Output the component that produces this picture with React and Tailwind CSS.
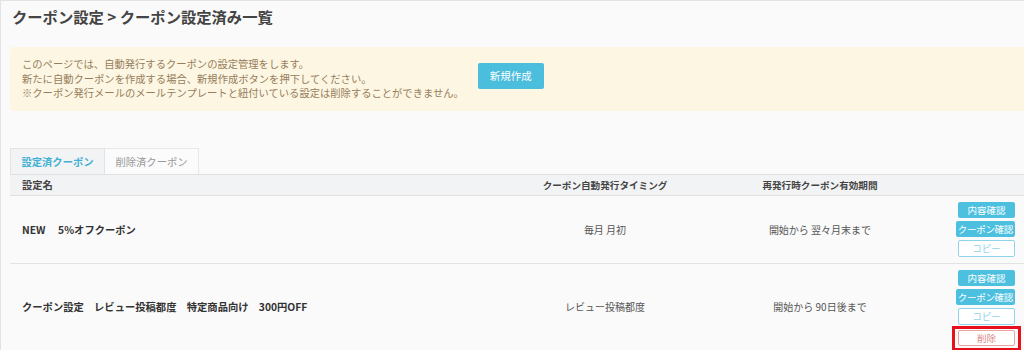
const rows = [
    {
        name: 'NEW\u3000 5%オフクーポン',
        timing: '毎月 月初',
        period: '開始から 翌々月末まで',
        deletable: false,
    },
    {
        name: 'クーポン設定\u3000レビュー投稿都度\u3000特定商品向け\u3000300円OFF',
        timing: 'レビュー投稿都度',
        period: '開始から 90日後まで',
        deletable: true,
    },
];

const RowButtons = ({ deletable }) => (
    <div className="flex flex-col items-end gap-[3px] pr-[9px]">
        <button className="h-[16px] min-w-[57px] px-[4px] bg-[#4dbfdf] rounded-[2px] text-white text-[9.5px] leading-[16px]">
            内容確認
        </button>
        <button className="h-[16px] min-w-[59px] px-[2px] bg-[#4dbfdf] rounded-[2px] text-white text-[9.5px] leading-[16px] tracking-[-0.3px]">
            クーポン確認
        </button>
        <button className="h-[17px] w-[57px] border border-[#8fd4ea] bg-white rounded-[2px] text-[#8fd4ea] text-[9.5px] leading-[15px]">
            コピー
        </button>
        {deletable && (
            <div className="-mt-[2px] -mr-[6px] px-[3px] pt-[1px] pb-[2px] border-[3px] border-[#e8101a]">
                <button className="block h-[16px] w-[57px] border border-[#eaa3a3] bg-white rounded-[2px] text-[#e08a8a] text-[9.5px] leading-[14px]">
                    削除
                </button>
            </div>
        )}
    </div>
);

const App = () => {
    return (
        <div
            className="min-h-[350px] bg-[#fafafa] border-l border-t border-[#e3e3e3] overflow-hidden"
            style={{ fontFamily: '"Noto Sans CJK JP", "Noto Sans", sans-serif' }}
        >
            <h1 className="pl-[11px] pt-[4px] text-[15.3px] leading-[22px] font-bold text-[#444]">
                クーポン設定 &gt; クーポン設定済み一覧
            </h1>

            {/* notice */}
            <div className="ml-[9px] mt-[20px] h-[64px] bg-[#fcf6e2] rounded-l-[3px] flex items-center">
                <div className="pl-[12px] text-[10.3px] leading-[14.5px] text-[#977d5c]">
                    <p>このページでは、自動発行するクーポンの設定管理をします。</p>
                    <p>新たに自動クーポンを作成する場合、新規作成ボタンを押下してください。</p>
                    <p>※クーポン発行メールのメールテンプレートと紐付いている設定は削除することができません。</p>
                </div>
                <button className="ml-[14px] mb-[7px] w-[66px] h-[26px] bg-[#4bbddd] rounded-[2px] text-white text-[10.5px]">
                    新規作成
                </button>
            </div>

            {/* tabs */}
            <div className="ml-[9px] mt-[37px] flex h-[26px]">
                <div className="w-[95px] bg-[#f2f3f5] border border-b-0 border-[#e3e3e3] flex items-center justify-center text-[10.3px] font-bold text-[#3fb1d2]">
                    設定済クーポン
                </div>
                <div className="w-[94px] bg-[#fbfbfb] border border-l-0 border-b-0 border-[#e8e8e8] flex items-center justify-center text-[10.3px] text-[#999]">
                    削除済クーポン
                </div>
            </div>

            {/* table */}
            <div className="ml-[9px]">
                <div className="grid grid-cols-[490px_210px_220px_1fr] h-[22px] items-center bg-[#f2f3f5] border-y border-[#e0e0e0] text-[9.6px] font-bold text-[#444]">
                    <div className="pl-[12px] text-[10.3px]">設定名</div>
                    <div className="text-center">クーポン自動発行タイミング</div>
                    <div className="text-center">再発行時クーポン有効期間</div>
                    <div />
                </div>
                {rows.map((r, i) => {
                    const shift = r.deletable ? 'mb-[8px]' : '';
                    return (
                        <div
                            key={i}
                            className={`grid grid-cols-[490px_210px_220px_1fr] items-center border-b border-[#e3e3e3] text-[10px] text-[#555] ${
                                r.deletable ? 'pt-[6px] pb-[2px]' : 'py-[6px]'
                            }`}
                        >
                            <div className={`pl-[12px] text-[10.3px] font-bold text-[#333] whitespace-pre ${shift}`}>{r.name}</div>
                            <div className={`text-center ${shift}`}>{r.timing}</div>
                            <div className={`text-center ${shift}`}>{r.period}</div>
                            <RowButtons deletable={r.deletable} />
                        </div>
                    );
                })}
            </div>
        </div>
    );
};

export default App;
